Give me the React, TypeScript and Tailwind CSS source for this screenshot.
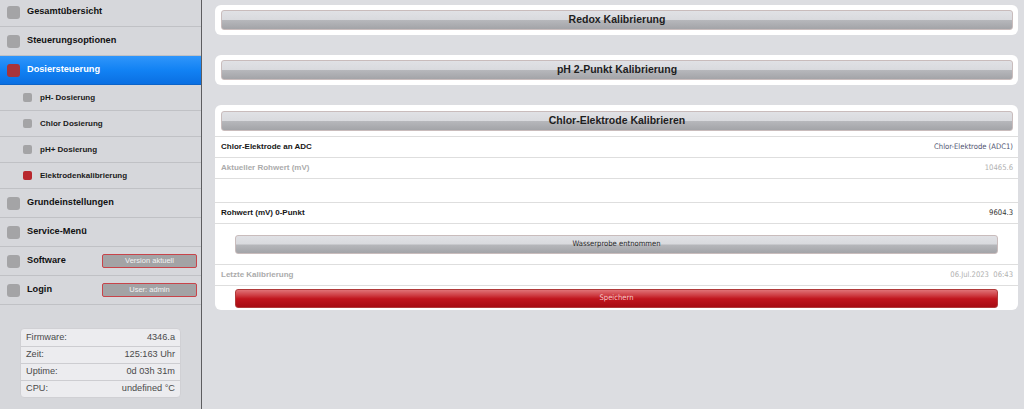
import type { ReactNode } from "react";

const sans = "font-['Liberation_Sans',Arial,sans-serif]";
const dejavu = "font-['DejaVu_Sans_Condensed','DejaVu_Sans',sans-serif]";

const grayBtn =
  "rounded-[3px] border border-[#c9bcbc] bg-[linear-gradient(to_bottom,#e0e1e5_0%,#d9dade_48%,#b6b7bb_52%,#a3a4a8_100%)]";
const redBtn =
  "rounded-[3px] border border-[#b03a3a] bg-[linear-gradient(to_bottom,#e07276_0%,#cf3f45_30%,#c0151d_52%,#a70c13_100%)]";

type NavEntry = {
  label: string;
  sub?: boolean;
  active?: boolean;
  red?: boolean;
  badge?: string;
};

const nav: NavEntry[] = [
  { label: "Gesamtübersicht" },
  { label: "Steuerungsoptionen" },
  { label: "Dosiersteuerung", active: true, red: true },
  { label: "pH- Dosierung", sub: true },
  { label: "Chlor Dosierung", sub: true },
  { label: "pH+ Dosierung", sub: true },
  { label: "Elektrodenkalibrierung", sub: true, red: true },
  { label: "Grundeinstellungen" },
  { label: "Service-Menü" },
  { label: "Software", badge: "Version aktuell" },
  { label: "Login", badge: "User: admin" },
];

const sysInfo = [
  ["Firmware:", "4346.a"],
  ["Zeit:", "125:163 Uhr"],
  ["Uptime:", "0d 03h 31m"],
  ["CPU:", "undefined °C"],
];

function NavRow({ item }: { item: NavEntry }) {
  if (item.sub) {
    return (
      <div className="flex h-[26px] items-center border-b border-[#c0c1c5] pl-[23px]">
        <span
          className={`h-[9px] w-[9px] rounded-[2px] ${item.red ? "bg-[#b8272d]" : "bg-[#a4a4a6]"}`}
        />
        <span className="ml-[8px] text-[8px] font-bold text-[#1a1a1a]">
          {item.label}
        </span>
      </div>
    );
  }
  return (
    <div
      className={`flex h-[29px] items-center border-b pl-[7px] pr-[4px] ${
        item.active
          ? "border-[#0b63c9] bg-[linear-gradient(to_bottom,#3096fb_0%,#1282f4_50%,#0a6fe2_100%)]"
          : "border-[#c0c1c5]"
      }`}
    >
      <span
        className={`h-[13px] w-[13px] rounded-[3px] ${item.red ? "bg-[#a8343a]" : "bg-[#a4a4a6]"}`}
      />
      <span
        className={`ml-[7px] text-[9.2px] font-bold ${item.active ? "text-white" : "text-[#111]"}`}
      >
        {item.label}
      </span>
      {item.badge && (
        <span className="ml-auto flex h-[14px] w-[95px] items-center justify-center rounded-[2px] border border-[#c8444a] bg-[#a3a3a5] text-[7.5px] text-[#f2f2f2]">
          {item.badge}
        </span>
      )}
    </div>
  );
}

function Card({ children }: { children: ReactNode }) {
  return <div className="rounded-[6px] bg-white">{children}</div>;
}

function HeaderButton({ title }: { title: string }) {
  return (
    <div className="py-[5px] pl-[6px] pr-[5px]">
      <div
        className={`${grayBtn} flex h-[20px] items-center justify-center text-[10.5px] font-bold text-[#1e1e1e]`}
      >
        {title}
      </div>
    </div>
  );
}

function Row({
  label,
  value,
  muted,
  valueClass,
}: {
  label: string;
  value: string;
  muted?: boolean;
  valueClass: string;
}) {
  return (
    <div className="flex h-[21px] items-center justify-between border-t border-[#dedede] pl-[6px] pr-[5px]">
      <span
        className={`text-[8px] font-bold ${muted ? "text-[#ababab]" : "text-[#161616]"}`}
      >
        {label}
      </span>
      <span className={`${dejavu} text-[7.6px] ${valueClass}`}>{value}</span>
    </div>
  );
}

export default function App() {
  return (
    <div className={`${sans} flex h-screen w-full overflow-hidden bg-[#dcdde1]`}>
      <aside className="flex w-[202px] shrink-0 flex-col border-r border-[#5d5d60] bg-[#d6d7db]">
        <div className="-mt-[2px]">
          {nav.map((item) => (
            <NavRow key={item.label} item={item} />
          ))}
        </div>
        <div className="mx-[20px] mt-[23px] rounded-[4px] border border-[#d0d0d4] bg-[#ececef]">
          {sysInfo.map(([k, v], i) => (
            <div
              key={k}
              className={`flex h-[17px] items-center justify-between px-[5px] text-[9.2px] text-[#4a4a4a] ${
                i > 0 ? "border-t border-[#cdcdd1]" : ""
              }`}
            >
              <span>{k}</span>
              <span>{v}</span>
            </div>
          ))}
        </div>
      </aside>

      <main className="flex flex-1 flex-col gap-[20px] pl-[13px] pr-[6px] pt-[5px]">
        <Card>
          <HeaderButton title="Redox Kalibrierung" />
        </Card>
        <Card>
          <HeaderButton title="pH 2-Punkt Kalibrierung" />
        </Card>
        <Card>
          <div className="pt-[1px]">
            <HeaderButton title="Chlor-Elektrode Kalibrieren" />
          </div>
          <Row
            label="Chlor-Elektrode an ADC"
            value="Chlor-Elektrode (ADC1)"
            valueClass="text-[#4f5470]"
          />
          <Row
            label="Aktueller Rohwert (mV)"
            value="10465.6"
            muted
            valueClass="text-[#b0b0b0]"
          />
          <div className="h-[24px] border-t border-[#dedede]" />
          <Row
            label="Rohwert (mV) 0-Punkt"
            value="9604.3"
            valueClass="text-[#333]"
          />
          <div className="flex h-[41px] items-center border-t border-[#dedede] px-[20px]">
            <button
              className={`${grayBtn} ${dejavu} flex h-[19px] w-full items-center justify-center text-[7.6px] text-[#2a2a2a]`}
            >
              Wasserprobe entnommen
            </button>
          </div>
          <Row
            label="Letzte Kalibrierung"
            value="06.Jul.2023  06:43"
            muted
            valueClass="whitespace-pre text-[#b0b0b0]"
          />
          <div className="flex h-[25px] items-center border-t border-[#dedede] px-[20px]">
            <button
              className={`${redBtn} ${dejavu} flex h-[19px] w-full items-center justify-center text-[7.6px] text-[#f6c9c9]`}
            >
              Speichern
            </button>
          </div>
        </Card>
      </main>
    </div>
  );
}
